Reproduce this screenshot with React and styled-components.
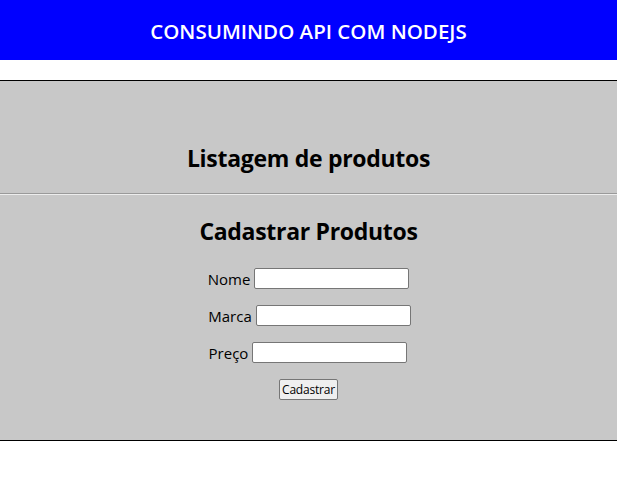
import React from "react";
import styled, { createGlobalStyle } from "styled-components";

const GlobalStyle = createGlobalStyle`
    body {
        margin: 0;
        background: #fff;
        font-family: "Open Sans", "Noto Sans", sans-serif;
        color: #000;
    }
`;

const Header = styled.header`
    height: 60px;
    background: #0000ff;
    display: flex;
    align-items: center;
    justify-content: center;

    h1 {
        margin: 0;
        padding-top: 2px;
        font-size: 20.5px;
        font-weight: 600;
        color: #fff;
    }
`;

const Main = styled.main`
    margin-top: 20px;
    background: #c8c8c8;
    border-top: 1px solid #000;
    border-bottom: 1px solid #000;
`;

const Title = styled.h2`
    margin: 0;
    text-align: center;
    font-size: 23px;
    line-height: 32px;
    font-weight: 700;
    letter-spacing: -0.3px;
`;

const ListSection = styled.section`
    padding: 61px 0 19px;
`;

const Divider = styled.hr`
    margin: 0;
    border: 0;
    border-top: 1px solid #9a9a9a;
    border-bottom: 1px solid #ededed;
`;

const Form = styled.form`
    padding: 20px 0 40px;
    display: flex;
    flex-direction: column;
    align-items: center;
`;

const Fields = styled.div`
    margin-top: 21px;
    display: flex;
    flex-direction: column;
    align-items: center;
    gap: 16px;
`;

const Row = styled.label`
    display: flex;
    align-items: center;
    gap: 4px;
    height: 21px;
    font-size: 15px;
    margin-left: ${(props) => props.shift || 0}px;
`;

const Input = styled.input`
    box-sizing: border-box;
    width: 155px;
    height: 21px;
    border: 1px solid #767676;
    border-radius: 2px;
    background: #fff;
    padding: 1px 2px;
    font: inherit;
    font-size: 13px;
`;

const Button = styled.button`
    margin-top: 16px;
    box-sizing: border-box;
    height: 21px;
    padding: 0 2px;
    border: 1px solid #767676;
    border-radius: 2px;
    background: #efefef;
    font-family: "Open Sans", "Noto Sans", sans-serif;
    font-size: 12px;
    color: #000;
    letter-spacing: -0.2px;
`;

const fields = [
    { label: "Nome", shift: 0 },
    { label: "Marca", shift: 2 },
    { label: "Preço", shift: -1 },
];

export default function App() {
    return (
        <React.Fragment>
            <GlobalStyle />
            <Header>
                <h1>CONSUMINDO API COM NODEJS</h1>
            </Header>
            <Main>
                <ListSection>
                    <Title>Listagem de produtos</Title>
                </ListSection>
                <Divider />
                <Form onSubmit={(e) => e.preventDefault()}>
                    <Title>Cadastrar Produtos</Title>
                    <Fields>
                        {fields.map((f) => (
                            <Row key={f.label} shift={f.shift}>
                                {f.label}
                                <Input type="text" />
                            </Row>
                        ))}
                    </Fields>
                    <Button type="submit">Cadastrar</Button>
                </Form>
            </Main>
        </React.Fragment>
    );
}
